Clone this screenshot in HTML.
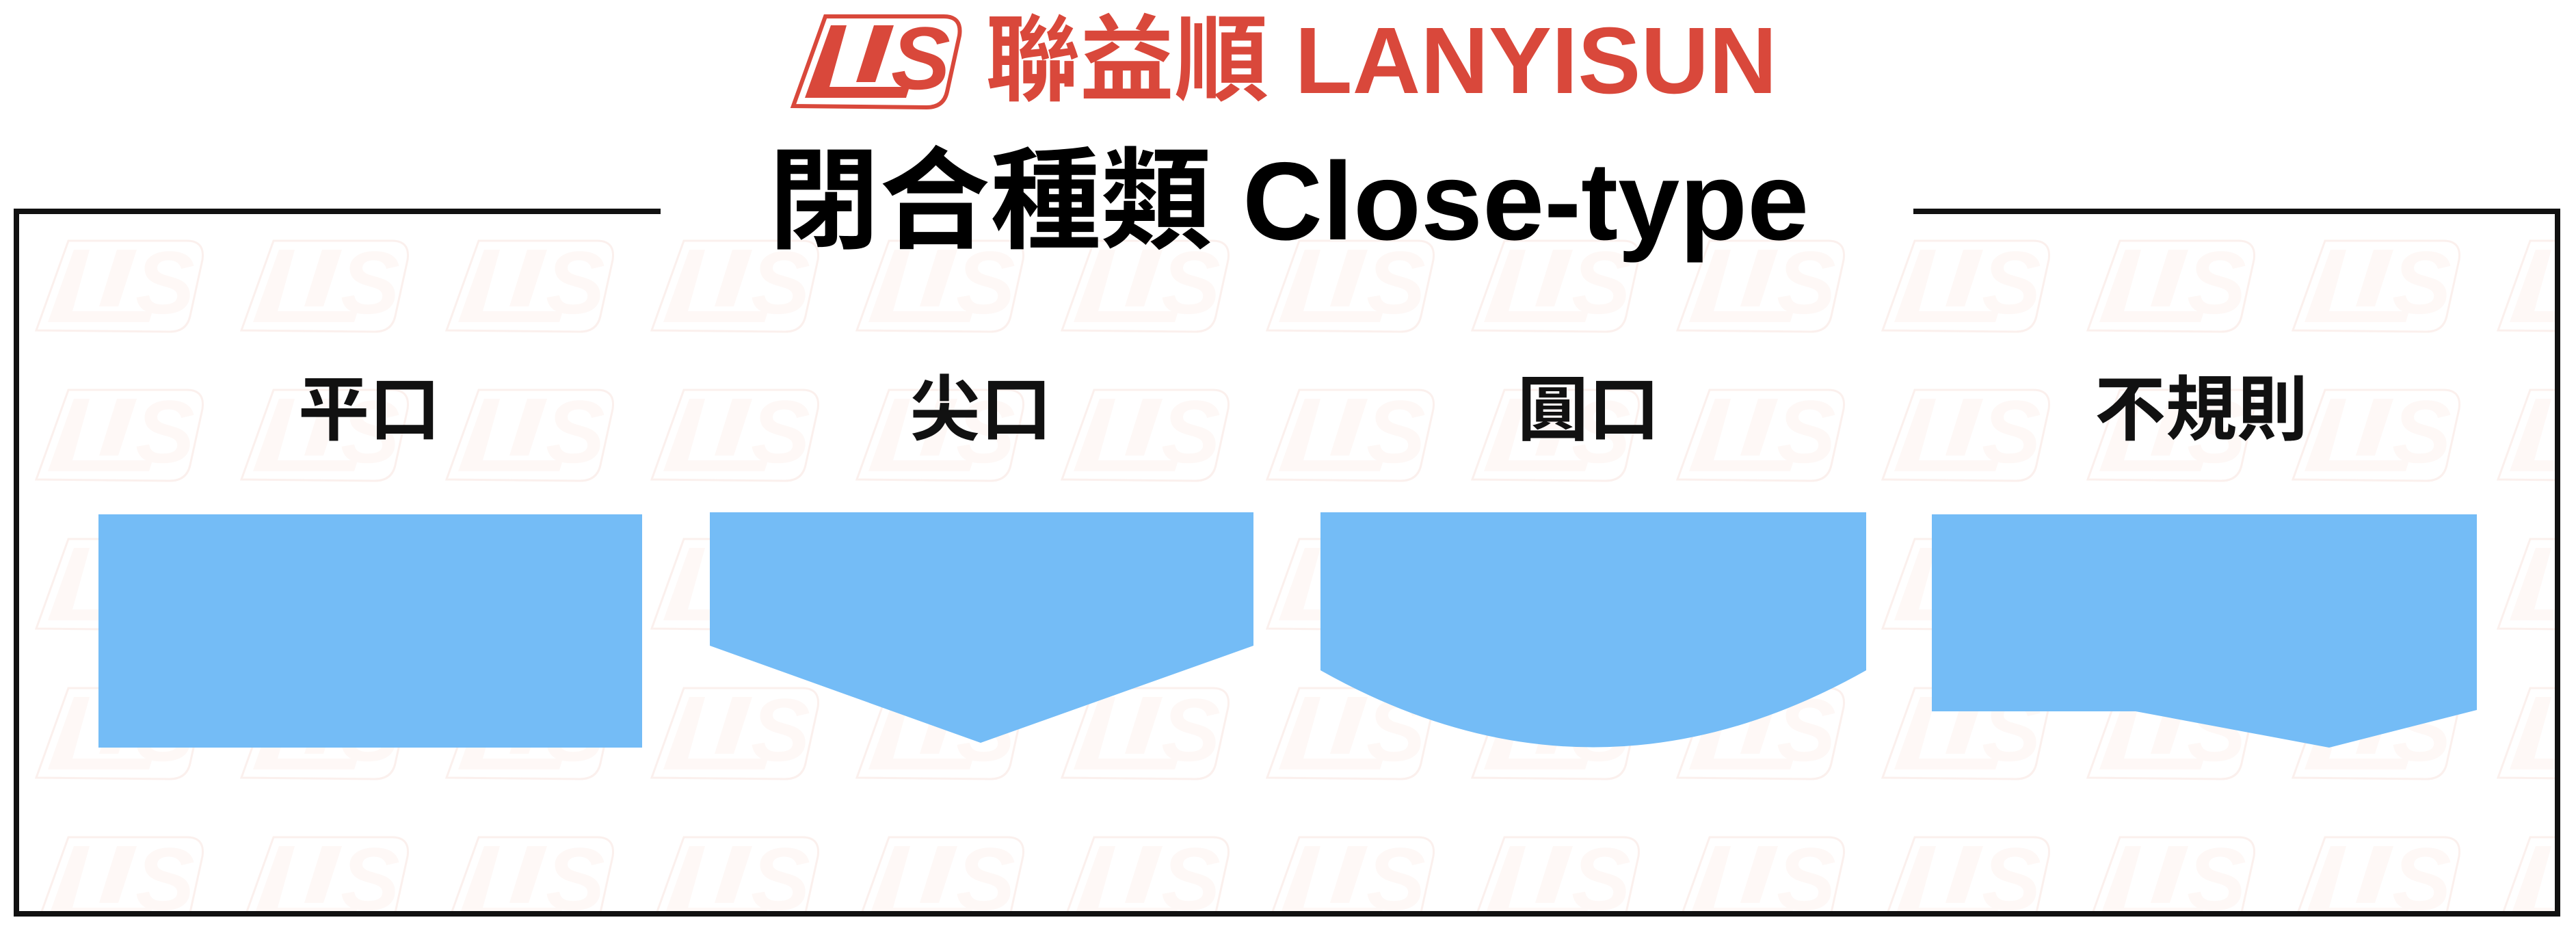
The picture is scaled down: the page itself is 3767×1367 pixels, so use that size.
<!DOCTYPE html>
<html><head><meta charset="utf-8"><style>
html,body{margin:0;padding:0;background:#fff;}
body{width:3767px;height:1367px;position:relative;overflow:hidden;font-family:"Liberation Sans","Noto Sans CJK TC",sans-serif;}
.abs{position:absolute;}
.lbl{position:absolute;top:548px;font-size:104px;font-weight:bold;color:#111;text-align:center;width:600px;line-height:1;font-family:"Liberation Sans","Noto Sans CJK TC",sans-serif;}
</style></head><body>
<svg class="abs" style="left:0;top:0" width="3767" height="1367">
<defs>
<pattern id="wm" x="48" y="350" width="300" height="218" patternUnits="userSpaceOnUse">
<g opacity="0.3" fill="none" stroke="#f4cfc4" stroke-width="3">
<path d="M5 133 L52 2 L225 2 Q252 2 248 30 L230 112 Q225 135 200 135 Z"/>
</g>
<g opacity="0.25" fill="#fbe3da">
<polygon points="60,15 83,15 58,105 175,105 170,121 22,121"/>
<polygon points="123,15 152,15 125,98 97,98"/>
<text x="150" y="108" font-size="130" font-weight="bold" font-style="italic" font-family="Liberation Sans">S</text>
</g>
</pattern>
</defs>
<rect x="24" y="312" width="3716" height="1024" fill="url(#wm)"/>
<g fill="#111">
<rect x="20" y="305" width="946" height="8"/>
<rect x="2798" y="305" width="946" height="8"/>
<rect x="20" y="305" width="8" height="1035"/>
<rect x="3736" y="305" width="8" height="1035"/>
<rect x="20" y="1332" width="3724" height="8"/>
</g>
<g transform="translate(1155,22)">
<path d="M5 133 L52 2 L225 2 Q252 2 248 30 L230 112 Q225 135 200 135 Z" fill="none" stroke="#d9483b" stroke-width="6"/>
<g fill="#d9483b">
<polygon points="60,15 83,15 58,105 175,105 170,121 22,121"/>
<polygon points="123,15 152,15 125,98 97,98"/>
<text x="148" y="108" font-size="130" font-weight="bold" font-style="italic" font-family="Liberation Sans">S</text>
</g>
</g>
<g fill="#74bcf6">
<rect x="144" y="752" width="795" height="341"/>
<polygon points="1038,749 1833,749 1833,944 1434,1086 1038,944"/>
<path d="M1931 749 L2729 749 L2729 980 Q2330 1205 1931 980 Z"/>
<polygon points="2825,752 3622,752 3622,1038 3406,1093 3123,1040 2825,1040"/>
</g>
</svg>
<div class="abs" style="left:1441px;top:20px;font-size:138px;font-weight:bold;color:#d9483b;line-height:1;white-space:nowrap;">聯益順 LANYISUN</div>
<div class="abs" style="left:1124px;top:210px;font-size:162px;font-weight:bold;color:#000;line-height:1.05;white-space:nowrap;">閉合種類 Close-type</div>
<div class="lbl" style="left:240px">平口</div>
<div class="lbl" style="left:1134px">尖口</div>
<div class="lbl" style="left:2023px">圓口</div>
<div class="lbl" style="left:2919px">不規則</div>
</body></html>
